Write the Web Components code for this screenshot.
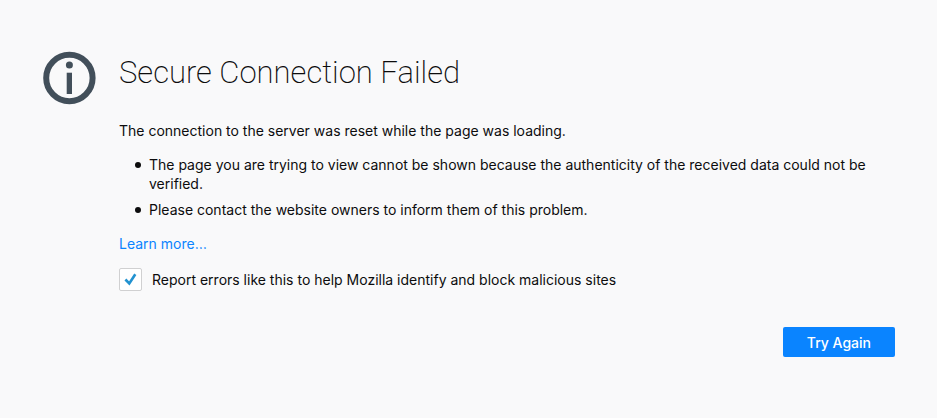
<!DOCTYPE html>
<html lang="en"><head><meta charset="utf-8"><title>Secure Connection Failed</title>
<style>body{margin:0;background:#f9f9fa;color:#0c0c0d;font:14px/19px Inter,"Liberation Sans",sans-serif}</style></head>
<body>
<error-page>
<info-icon slot="icon"></info-icon>
<h1 slot="title">Secure Connection Failed</h1>
<error-details></error-details>
<report-option></report-option>
<retry-button>Try Again</retry-button>
</error-page>
<script>
const define=(name,html)=>customElements.define(name,class extends HTMLElement{constructor(){super();this.attachShadow({mode:"open"}).innerHTML=html}});
define("info-icon",`<style>:host{display:block}svg{display:block;width:54px;height:54px}</style>
<svg viewBox="0 0 54 54" aria-hidden="true"><circle cx="27.4" cy="27" r="23.2" fill="none" stroke="#424f5a" stroke-width="6"/><path fill="#424f5a" d="M24.7 21.7H30V43h-5.3z"/><circle cx="27.4" cy="14" r="3.5" fill="#424f5a"/></svg>`);
define("error-details",`<style>:host{display:block}p{margin:0}ul{margin:15px 0;padding:0;list-style:none}li{display:grid;grid-template-columns:30px minmax(0,1fr)}li::before{content:"";width:6px;height:6px;border-radius:50%;background:currentColor;margin:7px 0 0 16px}li+li{margin-top:7px}a{color:#0a84ff;text-decoration:none}</style>
<p>The connection to the server was reset while the page was loading.</p>
<ul><li>The page you are trying to view cannot be shown because the authenticity of the received data could not be verified.</li><li>Please contact the website owners to inform them of this problem.</li></ul>
<a href="#">Learn more…</a>`);
define("report-option",`<style>:host{display:block;margin-top:15px}label{display:flex;align-items:center;gap:10px}.box{display:grid;width:23px;height:23px}.box>*{grid-area:1/1}input{appearance:none;box-sizing:border-box;width:23px;height:23px;margin:0;border:1px solid #d0d0d1;border-radius:2px;background:#fff}svg{width:23px;height:23px;pointer-events:none;visibility:hidden;z-index:1}input:checked+svg{visibility:visible}</style>
<label for="report"><span class="box"><input id="report" type="checkbox" checked><svg viewBox="0 0 23 23" aria-hidden="true"><path d="M6.4 11.5l3.9 4 6-9.3" fill="none" stroke="#2292d0" stroke-width="2.6"/></svg></span>Report errors like this to help Mozilla identify and block malicious sites</label>`);
define("retry-button",`<style>:host{display:flex;justify-content:flex-end;margin-top:36px}button{font:inherit;font-weight:500;color:#fff;background:#0a84ff;border:0;border-radius:2px;padding:0 24px;height:30px}</style><button type="button"><slot></slot></button>`);
define("error-page",`<style>:host{display:grid;grid-template-columns:54px minmax(0,1fr);column-gap:23px;padding:51px 42px 32px}::slotted(h1){margin:0;font-family:Roboto,sans-serif;font-size:31px;line-height:44px;font-weight:200}main{padding-top:26px}</style>
<slot name="icon"></slot><div><slot name="title"></slot><main><slot></slot></main></div>`);
</script></body></html>
